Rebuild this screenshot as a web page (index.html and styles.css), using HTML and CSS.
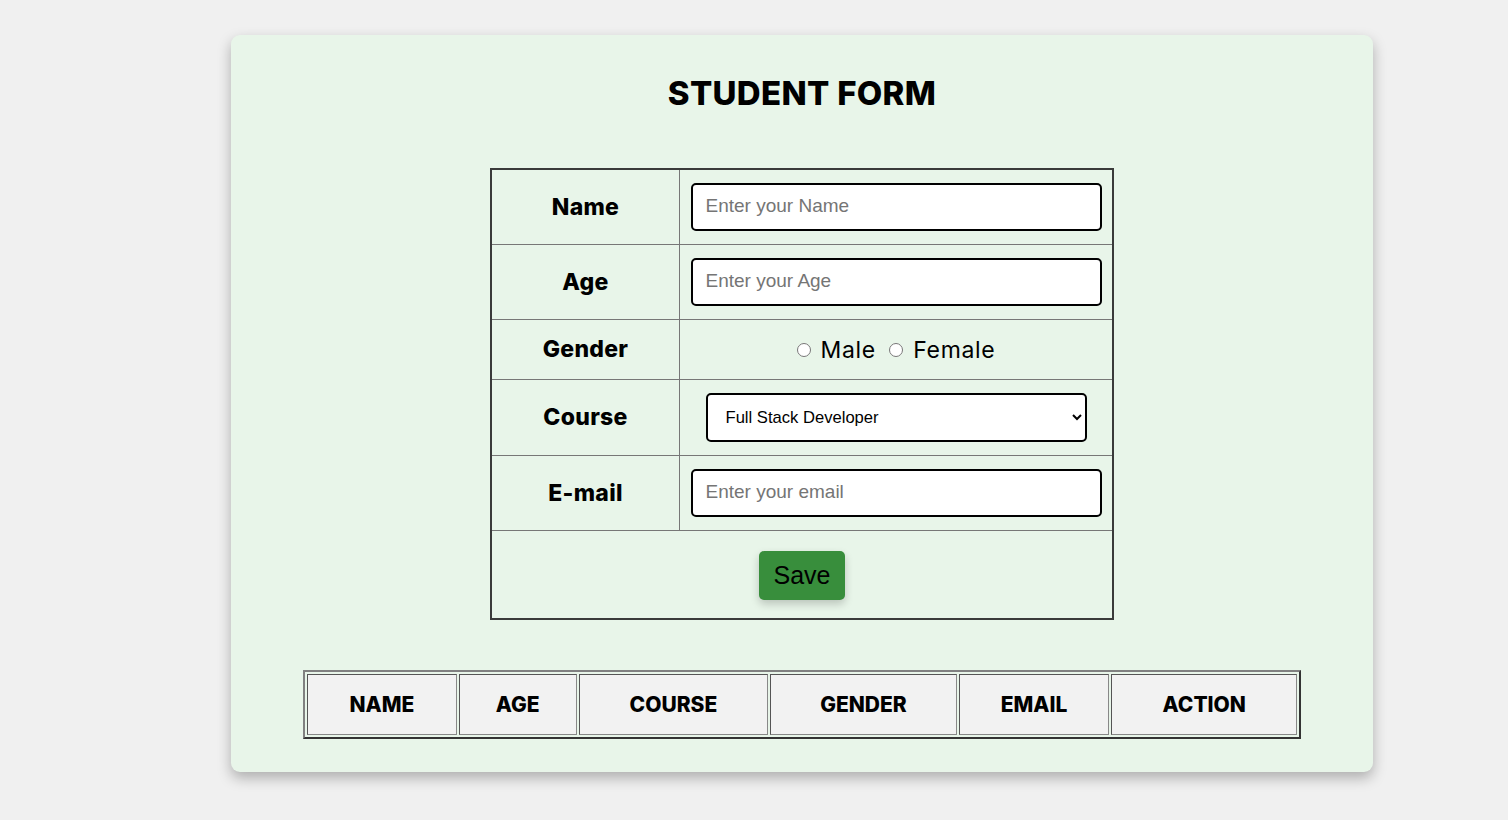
FILE: index.html
```html
<!DOCTYPE html>
<html>
<head>
<meta charset="utf-8">
<link rel="stylesheet" href="styles.css">
</head>
<body>
<div class="page">
  <div class="card">
    <h1 class="title">STUDENT FORM</h1>
    <table class="form-table">
      <tr class="row-input">
        <th class="label">Name</th>
        <td class="field"><input class="text-input" type="text" placeholder="Enter your Name"></td>
      </tr>
      <tr class="row-input">
        <th class="label">Age</th>
        <td class="field"><input class="text-input" type="text" placeholder="Enter your Age"></td>
      </tr>
      <tr class="row-gender">
        <th class="label">Gender</th>
        <td class="field gender">
          <label class="radio"><input type="radio" name="g"> Male</label>
          <label class="radio"><input type="radio" name="g"> Female</label>
        </td>
      </tr>
      <tr class="row-course">
        <th class="label">Course</th>
        <td class="field">
          <select class="select">
            <option>Full Stack Developer</option>
          </select>
        </td>
      </tr>
      <tr class="row-input">
        <th class="label">E-mail</th>
        <td class="field"><input class="text-input" type="text" placeholder="Enter your email"></td>
      </tr>
      <tr class="row-save">
        <td class="save-cell" colspan="2"><button class="save">Save</button></td>
      </tr>
    </table>
    <table class="list-table">
      <tr>
        <th class="c-name">NAME</th>
        <th class="c-age">AGE</th>
        <th class="c-course">COURSE</th>
        <th class="c-gender">GENDER</th>
        <th class="c-email">EMAIL</th>
        <th class="c-action">ACTION</th>
      </tr>
    </table>
  </div>
</div>
</body>
</html>
```
FILE: styles.css
```css
html, body {
  margin: 0;
  padding: 0;
  background: #f0f0f0;
}
.page {
  padding: 35px 135px 40px 231px;
}
.card {
  background: #e8f5e9;
  border-radius: 9px;
  box-shadow: 0 6px 14px rgba(0, 0, 0, 0.28);
  height: 737px;
  box-sizing: border-box;
  padding-top: 38px;
  display: flex;
  flex-direction: column;
  align-items: center;
  font-family: "Inter", "Noto Sans", sans-serif;
}
.title {
  margin: 0;
  font-size: 33px;
  font-weight: 800;
  line-height: 40px;
  color: #000;
  letter-spacing: 0.3px;
}
.form-table {
  margin-top: 55px;
  width: 624px;
  border-collapse: collapse;
  border: 2px solid #3a3a3a;
}
.form-table th,
.form-table td {
  border: 1px solid #777;
  padding: 0;
}
.label {
  width: 187px;
  font-size: 23px;
  font-weight: 800;
  letter-spacing: 0.3px;
  color: #000;
  text-align: center;
}
.row-input {
  height: 75px;
}
.row-course {
  height: 76px;
}
.row-gender {
  height: 60px;
}
.row-save {
  height: 89px;
}
.field {
  text-align: center;
}
.text-input {
  width: 411px;
  height: 48px;
  box-sizing: border-box;
  border: 2px solid #000;
  border-radius: 5px;
  padding: 0 13px 2px;
  font-family: "Liberation Sans", Arial, sans-serif;
  font-size: 19px;
  background: #fff;
  display: block;
  margin: 0 auto;
}
.text-input::placeholder {
  color: #757575;
}
.select {
  width: 381px;
  height: 49px;
  box-sizing: border-box;
  border: 2px solid #000;
  border-radius: 5px;
  padding: 0 14px;
  font-family: "Liberation Sans", Arial, sans-serif;
  font-size: 16.6px;
  color: #000;
  background: #fff;
  display: block;
  margin: 0 auto;
}
.gender {
  font-size: 23px;
  font-weight: 400;
  letter-spacing: 0.7px;
  color: #000;
}
.radio {
  display: inline-flex;
  align-items: center;
  gap: 6px;
  margin: 0 3px;
}
.radio input {
  width: 14px;
  height: 14px;
  margin: 0 4px 0 0;
}
.save-cell {
  text-align: center;
}
.save {
  background: #388e3c;
  color: #000;
  border: none;
  border-radius: 5px;
  padding: 10px 15px;
  font-family: "Liberation Sans", Arial, sans-serif;
  font-size: 25px;
  line-height: 29px;
  box-shadow: 0 4px 8px rgba(0, 0, 0, 0.2);
  margin-top: 3px;
}
.list-table {
  margin-top: 50px;
  width: 998px;
  border-spacing: 2px;
  border-width: 2px;
  border-style: solid;
  border-color: #808080 #333 #333 #808080;
}
.list-table th {
  background: #f2f2f2;
  height: 61px;
  box-sizing: border-box;
  border: 1px solid;
  border-color: #555 #888 #888 #555;
  font-size: 21px;
  font-weight: 800;
  color: #000;
  padding: 0;
}
.c-name { width: 151px; }
.c-age { width: 119px; }
.c-course { width: 191px; }
.c-gender { width: 188px; }
.c-email { width: 152px; }
.c-action { width: 187px; }
```
